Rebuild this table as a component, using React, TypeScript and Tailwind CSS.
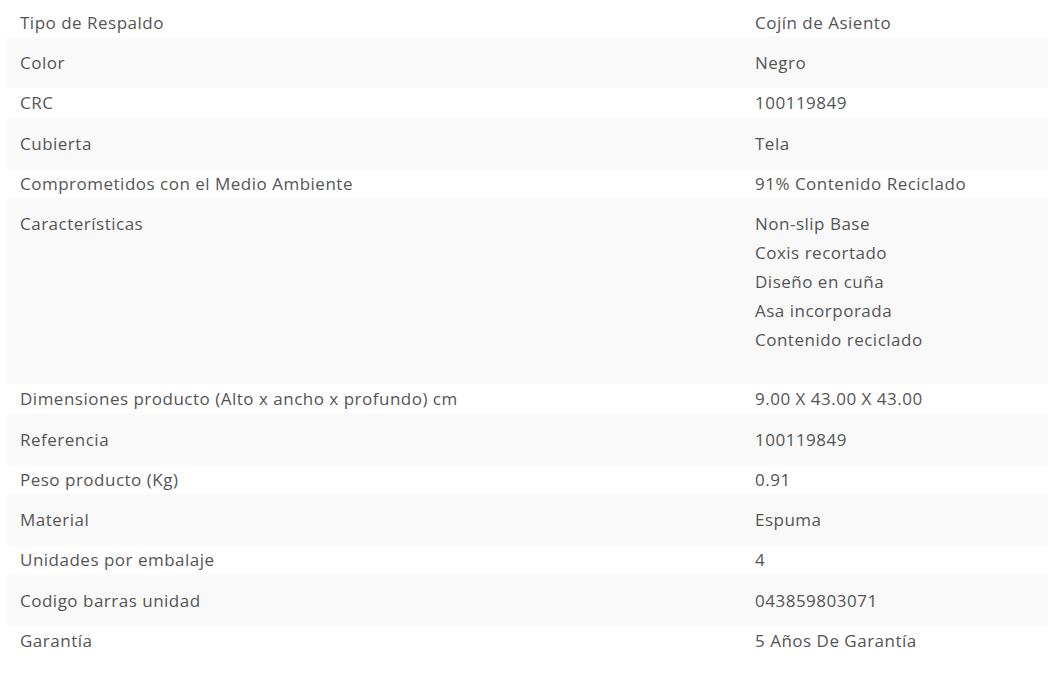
import React from 'react';

type Spec = { label: string; values: string[] };

const specs: Spec[] = [
  { label: 'Tipo de Respaldo', values: ['Cojín de Asiento'] },
  { label: 'Color', values: ['Negro'] },
  { label: 'CRC', values: ['100119849'] },
  { label: 'Cubierta', values: ['Tela'] },
  { label: 'Comprometidos con el Medio Ambiente', values: ['91% Contenido Reciclado'] },
  {
    label: 'Características',
    values: ['Non-slip Base', 'Coxis recortado', 'Diseño en cuña', 'Asa incorporada', 'Contenido reciclado'],
  },
  { label: 'Dimensiones producto (Alto x ancho x profundo) cm', values: ['9.00 X 43.00 X 43.00'] },
  { label: 'Referencia', values: ['100119849'] },
  { label: 'Peso producto (Kg)', values: ['0.91'] },
  { label: 'Material', values: ['Espuma'] },
  { label: 'Unidades por embalaje', values: ['4'] },
  { label: 'Codigo barras unidad', values: ['043859803071'] },
  { label: 'Garantía', values: ['5 Años De Garantía'] },
];

const SpecRow: React.FC<{ spec: Spec; index: number }> = ({ spec, index }) => {
  const striped = index % 2 === 1;
  const multi = spec.values.length > 1;

  let rowClass = 'h-[29.5px]';
  if (index === 0) rowClass = 'h-[37px] pt-[8px]';
  else if (multi) rowClass = 'pt-[11px] pb-[30px]';
  else if (striped) rowClass = 'h-[51px] pt-[11px]';

  return (
    <div className={`flex ${rowClass} ${striped ? 'bg-[#f9f9f9]' : ''}`}>
      <div className="w-[748px] shrink-0 pl-[13px]">{spec.label}</div>
      <div className="flex flex-col">
        {spec.values.map(v => (
          <span key={v}>{v}</span>
        ))}
      </div>
    </div>
  );
};

export default function App() {
  return (
    <div className="w-[1048px] h-[688px] bg-white pl-[7px] text-[17px] leading-[29px] tracking-[0.5px] text-[#555555] font-['Open_Sans','Lato',sans-serif]">
      {specs.map((s, i) => (
        <SpecRow key={s.label} spec={s} index={i} />
      ))}
    </div>
  );
}
